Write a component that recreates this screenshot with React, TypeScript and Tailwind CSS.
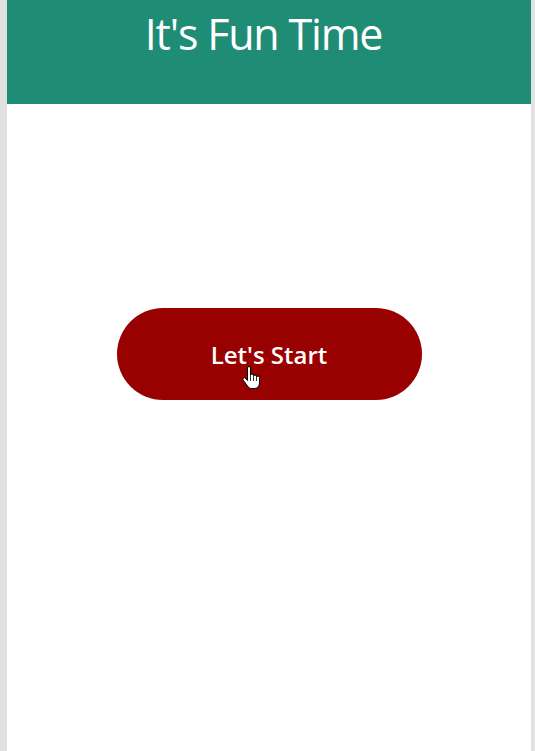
import React from 'react';

function HandCursor() {
  return (
    <svg width="18" height="24" viewBox="0 0 18 24" className="absolute left-[125px] top-[58px] pointer-events-none">
      <path
        d="M5.5 2a1.5 1.5 0 0 1 3 0V9.5a1.5 1.5 0 0 1 3 0V10.5a1.5 1.5 0 0 1 3 0V11.5a1.5 1.5 0 0 1 3 0V17c0 3-2 5.5-5 5.5H9.5c-2 0-3-1-4-2.5L1.2 14.2a1.5 1.5 0 0 1 2.4-1.8L5.5 14.5Z"
        fill="#fff"
        stroke="#000"
        strokeWidth="1"
        strokeLinejoin="round"
      />
      <path d="M8.5 10v5M11.5 11v4M14.5 12v3" stroke="#000" strokeWidth="0.8" />
    </svg>
  );
}

export default function App() {
  return (
    <div className="min-h-screen bg-[#e1e1e1] pl-[7px] pr-[4px]" style={{ fontFamily: '"Open Sans", "Noto Sans", sans-serif' }}>
      <div className="min-h-screen bg-white flex flex-col items-center">
        <header className="w-full h-[104px] bg-[#1f8c75] flex justify-center pr-[11px]">
          <h1 className="text-white text-[43px] leading-none mt-[12px] tracking-[-1.2px]">It's Fun Time</h1>
        </header>

        <button className="relative mt-[204px] w-[305px] h-[92px] rounded-full bg-[#990000] text-white text-[24px] font-semibold flex items-center justify-center pt-[2px]">
          Let's Start
          <HandCursor />
        </button>
      </div>
    </div>
  );
}
